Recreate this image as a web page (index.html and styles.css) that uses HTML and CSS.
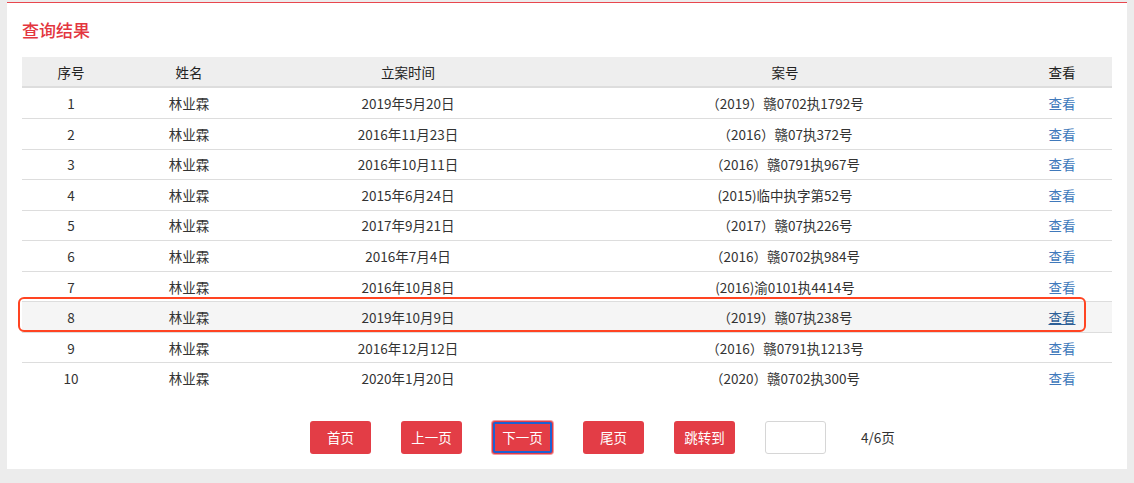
FILE: index.html
```html
<!DOCTYPE html>
<html lang="zh">
<head>
<meta charset="utf-8">
<link rel="stylesheet" href="styles.css">
</head>
<body>
<div class="panel">
  <h2 class="title">查询结果</h2>
  <div class="table-wrap">
    <table class="result">
      <colgroup>
        <col style="width:98px"><col style="width:138px"><col style="width:300px"><col style="width:454px"><col style="width:100px">
      </colgroup>
      <thead>
        <tr><th>序号</th><th>姓名</th><th>立案时间</th><th>案号</th><th>查看</th></tr>
      </thead>
      <tbody>
        <tr><td>1</td><td>林业霖</td><td>2019年5月20日</td><td>（2019）赣0702执1792号</td><td><a class="view">查看</a></td></tr>
        <tr><td>2</td><td>林业霖</td><td>2016年11月23日</td><td>（2016）赣07执372号</td><td><a class="view">查看</a></td></tr>
        <tr><td>3</td><td>林业霖</td><td>2016年10月11日</td><td>（2016）赣0791执967号</td><td><a class="view">查看</a></td></tr>
        <tr><td>4</td><td>林业霖</td><td>2015年6月24日</td><td>(2015)临中执字第52号</td><td><a class="view">查看</a></td></tr>
        <tr><td>5</td><td>林业霖</td><td>2017年9月21日</td><td>（2017）赣07执226号</td><td><a class="view">查看</a></td></tr>
        <tr><td>6</td><td>林业霖</td><td>2016年7月4日</td><td>（2016）赣0702执984号</td><td><a class="view">查看</a></td></tr>
        <tr><td>7</td><td>林业霖</td><td>2016年10月8日</td><td>(2016)渝0101执4414号</td><td><a class="view">查看</a></td></tr>
        <tr class="hover"><td>8</td><td>林业霖</td><td>2019年10月9日</td><td>（2019）赣07执238号</td><td><a class="view under">查看</a></td></tr>
        <tr><td>9</td><td>林业霖</td><td>2016年12月12日</td><td>（2016）赣0791执1213号</td><td><a class="view">查看</a></td></tr>
        <tr><td>10</td><td>林业霖</td><td>2020年1月20日</td><td>（2020）赣0702执300号</td><td><a class="view">查看</a></td></tr>
      </tbody>
    </table>
    <div class="mark"></div>
  </div>
  <div class="pager">
    <button class="btn">首页</button>
    <button class="btn">上一页</button>
    <button class="btn focus">下一页</button>
    <button class="btn">尾页</button>
    <button class="btn">跳转到</button>
    <input class="jump" type="text">
    <span class="count">4/6页</span>
  </div>
</div>
</body>
</html>
```

FILE: styles.css
```css
html, body {
  margin: 0;
  padding: 0;
  background: #ececec;
  font-family: "Noto Sans CJK SC", "Noto Sans", sans-serif;
  color: #333;
}
.panel {
  margin-left: 7px;
  margin-top: 2px;
  width: 1120px;
  height: 467px;
  background: #fff;
  border-top: 1px solid #e8474e;
  box-sizing: border-box;
}
.title {
  margin: 0;
  padding: 15px 0 0 15px;
  height: 39px;
  box-sizing: border-box;
  font-size: 17px;
  line-height: 24px;
  font-weight: 500;
  color: #e3363f;
}
.table-wrap {
  position: relative;
  margin: 15px 0 0 15px;
  width: 1090px;
}
.result {
  width: 1090px;
  border-collapse: collapse;
  table-layout: fixed;
  font-size: 13.5px;
}
.result th {
  background: #eeeeee;
  height: 29px;
  font-weight: normal;
  color: #222;
  border-bottom: 2px solid #dddddd;
  padding: 0;
  font-size: 13.5px;
}
.result td {
  height: 29.55px;
  padding: 0;
  text-align: center;
  border-top: 1px solid #dddddd;
  line-height: 18px;
}
.result tbody tr:first-child td {
  border-top: none;
  height: 30px;
}
.result tr.hover td {
  background: #f5f5f5;
}
.view {
  color: #4079bb;
  cursor: pointer;
}
.view.under {
  text-decoration: underline;
  color: #2d5f97;
}
.mark {
  position: absolute;
  left: -4px;
  top: 240px;
  width: 1068px;
  height: 35px;
  border: 2.5px solid #ff4422;
  border-radius: 6px;
  box-sizing: border-box;
}
.pager {
  display: flex;
  align-items: center;
  margin: 28px 0 0 303px;
  gap: 30px;
}
.btn {
  width: 61px;
  height: 33px;
  background: #e33d46;
  color: #fff;
  border: none;
  border-radius: 3px;
  font-family: "Noto Sans CJK SC", sans-serif;
  font-size: 13.5px;
  padding: 0;
}
.btn.focus {
  outline: 2px solid #1b62d3;
  outline-offset: -3px;
  box-shadow: 0 0 0 1px #f29aa0;
}
.jump {
  width: 61px;
  height: 33px;
  box-sizing: border-box;
  border: 1px solid #d6d6d6;
  border-radius: 3px;
  padding: 0;
}
.count {
  font-size: 13.5px;
  color: #333;
  margin-left: 5px;
}
```
